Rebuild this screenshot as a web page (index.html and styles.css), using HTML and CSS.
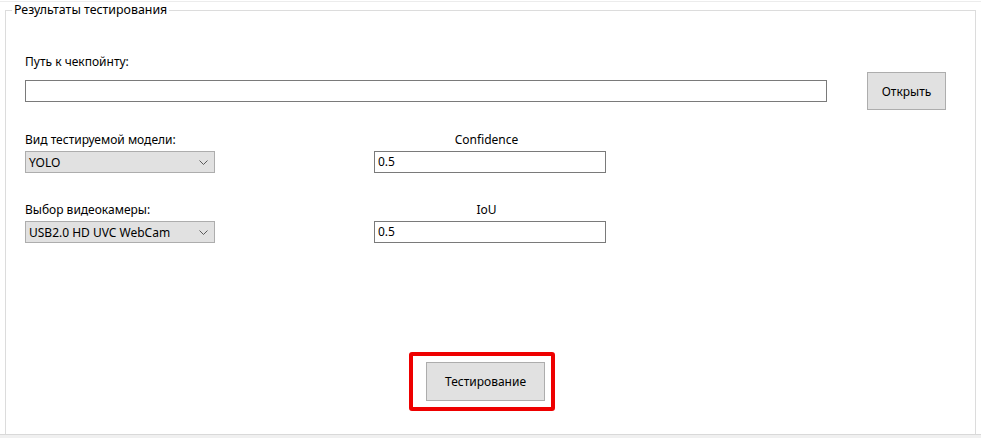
FILE: index.html
```html
<!DOCTYPE html>
<html lang="ru">
<head>
<meta charset="utf-8">
<title>Результаты тестирования</title>
<link rel="stylesheet" href="styles.css">
</head>
<body>
<div class="window">
  <div class="topline"></div>
  <fieldset class="group">
    <legend class="group-title">Результаты тестирования</legend>
    <div class="content">
      <div class="path-label">Путь к чекпойнту:</div>
      <div class="path-row">
        <div class="textbox path-input"></div>
        <div class="button open-btn">Открыть</div>
      </div>
      <div class="fields">
        <div class="field">
          <div class="field-label">Вид тестируемой модели:</div>
          <div class="combo"><span>YOLO</span>
            <svg class="chev" width="9" height="5" viewBox="0 0 9 5"><polyline points="0.5,0.5 4.5,4.5 8.5,0.5" fill="none" stroke="#5a5a5a" stroke-width="1"/></svg>
          </div>
        </div>
        <div class="field center">
          <div class="field-label">Confidence</div>
          <div class="textbox">0.5</div>
        </div>
        <div class="field">
          <div class="field-label">Выбор видеокамеры:</div>
          <div class="combo"><span>USB2.0 HD UVC WebCam</span>
            <svg class="chev" width="9" height="5" viewBox="0 0 9 5"><polyline points="0.5,0.5 4.5,4.5 8.5,0.5" fill="none" stroke="#5a5a5a" stroke-width="1"/></svg>
          </div>
        </div>
        <div class="field center">
          <div class="field-label">IoU</div>
          <div class="textbox">0.5</div>
        </div>
      </div>
      <div class="highlight">
        <div class="button test-btn">Тестирование</div>
      </div>
    </div>
  </fieldset>
  <div class="footer"></div>
</div>
</body>
</html>
```

FILE: styles.css
```css
html, body {
  margin: 0;
  padding: 0;
  background: #ffffff;
}

body {
  font-family: "Noto Sans", "Open Sans", sans-serif;
  font-size: 12px;
  color: #000000;
}

.window {
  height: 438px;
  display: flex;
  flex-direction: column;
  overflow: hidden;
}

.topline {
  height: 1px;
  margin-top: 1px;
  background: #ececec;
}

.group {
  flex: 1;
  min-width: 0;
  margin: 1px 5px 0 5px;
  padding: 0;
  border: 1px solid #dcdcdc;
  border-bottom: none;
}

.group-title {
  margin-left: 6px;
  padding: 0 2px;
  line-height: 14px;
  font-size: 12.4px;
}

.content {
  display: flex;
  flex-direction: column;
  padding: 0 29px 0 19px;
}

.path-label {
  margin-top: 37px;
  line-height: 15px;
}

.path-row {
  margin-top: 3px;
  display: flex;
  align-items: center;
  gap: 40px;
}

.textbox {
  box-sizing: border-box;
  height: 22px;
  border: 1px solid #7a7a7a;
  background: #ffffff;
  padding: 0 3px;
  line-height: 20px;
}

.path-input {
  flex: 1;
}

.button {
  box-sizing: border-box;
  background: #e1e1e1;
  border: 1px solid #adadad;
  display: flex;
  align-items: center;
  justify-content: center;
}

.open-btn {
  width: 79px;
  height: 38px;
}

.fields {
  margin-top: 22px;
  display: grid;
  grid-template-columns: 190px 232px;
  column-gap: 159px;
  row-gap: 29px;
  align-items: end;
}

.field {
  display: flex;
  flex-direction: column;
}

.field-label {
  line-height: 15px;
  margin-bottom: 4px;
}

.field.center .field-label {
  text-align: center;
  padding-right: 7px;
}

.combo {
  box-sizing: border-box;
  height: 22px;
  border: 1px solid #adadad;
  background: #e1e1e1;
  padding: 0 6px 0 3px;
  display: flex;
  align-items: center;
  justify-content: space-between;
}

.chev {
  display: block;
}

.highlight {
  align-self: center;
  margin-top: 109px;
  margin-right: 7px;
  border: 4px solid #ee0000;
  border-radius: 3px;
  padding: 6px 6px 6px 13px;
}

.test-btn {
  width: 119px;
  height: 39px;
}

.footer {
  height: 3px;
  border-top: 1px solid #d9d9d9;
  background: #f0f0f0;
}
```
